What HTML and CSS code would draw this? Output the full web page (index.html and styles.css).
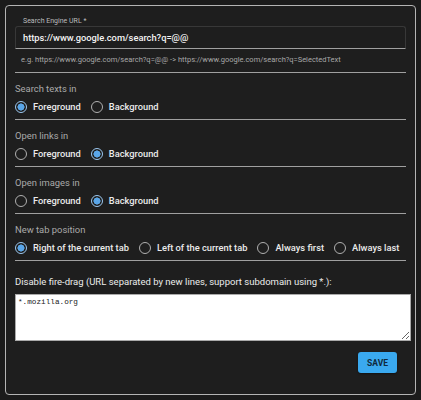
FILE: index.html
```html
<!DOCTYPE html>
<html>
<head>
<meta charset="utf-8">
<link rel="stylesheet" href="styles.css">
</head>
<body>
<div class="panel">
  <div class="field">
    <label class="field-label">Search Engine URL *</label>
    <div class="field-box">https://www.google.com/search?q=@@</div>
    <div class="helper">e.g. https://www.google.com/search?q=@@ -&gt; https://www.google.com/search?q=SelectedText</div>
  </div>
  <div class="group">
    <div class="group-title">Search texts in</div>
    <div class="radios">
      <span class="radio checked"><span class="dot"></span>Foreground</span>
      <span class="radio"><span class="dot"></span>Background</span>
    </div>
  </div>
  <div class="group">
    <div class="group-title">Open links in</div>
    <div class="radios">
      <span class="radio"><span class="dot"></span>Foreground</span>
      <span class="radio checked"><span class="dot"></span>Background</span>
    </div>
  </div>
  <div class="group">
    <div class="group-title">Open images in</div>
    <div class="radios">
      <span class="radio"><span class="dot"></span>Foreground</span>
      <span class="radio checked"><span class="dot"></span>Background</span>
    </div>
  </div>
  <div class="group">
    <div class="group-title">New tab position</div>
    <div class="radios">
      <span class="radio checked"><span class="dot"></span>Right of the current tab</span>
      <span class="radio"><span class="dot"></span>Left of the current tab</span>
      <span class="radio"><span class="dot"></span>Always first</span>
      <span class="radio"><span class="dot"></span>Always last</span>
    </div>
  </div>
  <div class="drag">
    <div class="drag-title">Disable fire-drag (URL separated by new lines, support subdomain using *.):</div>
    <textarea class="drag-area">*.mozilla.org</textarea>
  </div>
  <div class="actions">
    <button class="save">SAVE</button>
  </div>
</div>
</body>
</html>
```

FILE: styles.css
```css
html, body {
  margin: 0;
  padding: 0;
  background: #1b1b1b;
}
body {
  padding: 5px;
  font-family: Roboto, "Liberation Sans", sans-serif;
}
.panel {
  box-sizing: border-box;
  height: 390px;
  width: 411px;
  border: 1px solid #b4b4b4;
  border-radius: 4px;
  background: #1e1e1e;
  padding: 11px 9px 0 9px;
}
.field-label {
  display: block;
  font-size: 7px;
  color: #bdbdbd;
  padding-left: 8px;
  line-height: 9px;
}
.field-box {
  margin-top: 0;
  height: 23px;
  border: 1px solid #383838;
  border-bottom: 1px solid #a0a0a0;
  border-radius: 3px 3px 0 0;
  box-sizing: border-box;
  padding-left: 7px;
  font-size: 9.3px;
  line-height: 22px;
  color: #f4f4f4;
  font-weight: 500;
}
.helper {
  font-size: 7.5px;
  color: #a8a8a8;
  padding: 6px 0 7px 6px;
  border-bottom: 1px solid #a0a0a0;
  line-height: 10px;
}
.group {
  border-bottom: 1px solid #a0a0a0;
  padding: 9px 0 6px 0;
}
.group-title {
  font-size: 9.4px;
  color: #aaaaaa;
  line-height: 14px;
}
.radios {
  display: flex;
  gap: 10px;
  margin-top: 4px;
}
.radio {
  display: flex;
  align-items: center;
  gap: 6px;
  font-size: 9.3px;
  font-weight: 500;
  color: #ebebeb;
  line-height: 13px;
}
.dot {
  box-sizing: border-box;
  width: 12px;
  height: 12px;
  border-radius: 50%;
  border: 1.5px solid #b0b0b0;
}
.radio.checked .dot {
  border-color: #9cc8f0;
  background: radial-gradient(circle, #5aa6e8 0 3.3px, transparent 3.8px);
}
.drag {
  padding-top: 15px;
}
.drag-title {
  font-size: 9.5px;
  color: #ececec;
  line-height: 12px;
}
.drag-area {
  display: block;
  box-sizing: border-box;
  margin-top: 6px;
  width: 396px;
  height: 47px;
  background: #ffffff;
  color: #222;
  font-family: "Liberation Mono", monospace;
  font-size: 7.7px;
  border: 1px solid #aaa;
  padding: 3px 2px;
  resize: vertical;
}
.actions {
  display: flex;
  justify-content: flex-end;
  padding-right: 9px;
  margin-top: 11px;
}
.save {
  background: #3aa9ef;
  border: none;
  border-radius: 3px;
  color: #102a3c;
  font-family: Roboto, sans-serif;
  font-weight: 700;
  font-size: 8.5px;
  width: 39px;
  height: 21px;
  padding: 0;
  box-shadow: 0 1px 2px rgba(0,0,0,0.4);
}
```
